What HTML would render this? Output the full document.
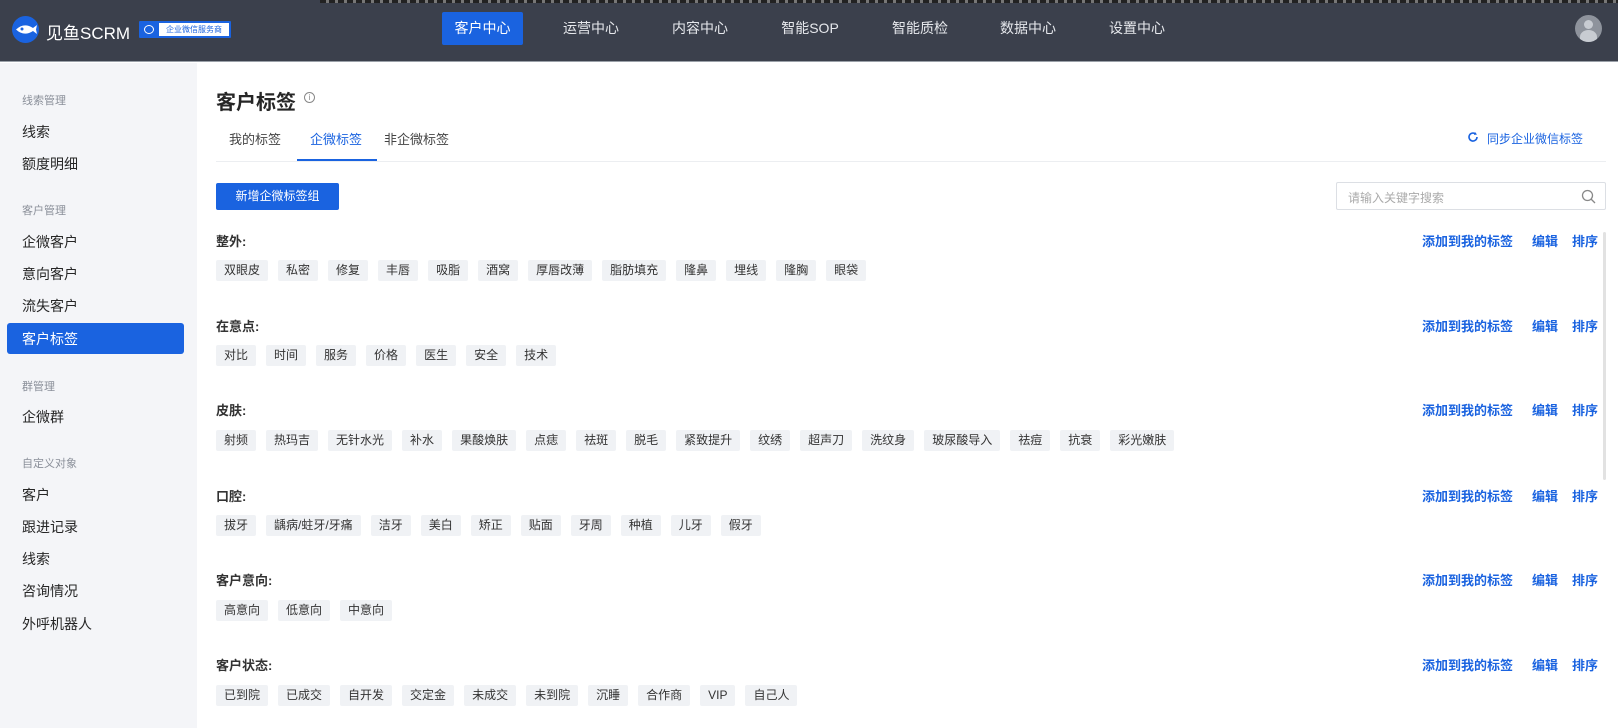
<!DOCTYPE html>
<html><head><meta charset="utf-8"><style>
*{margin:0;padding:0;box-sizing:border-box}
body{width:1618px;height:728px;overflow:hidden;background:#fff;font-family:"Liberation Sans","Noto Sans CJK SC",sans-serif;position:relative;color:#262626}
.hdr{position:absolute;left:0;top:0;width:1618px;height:62px;background:#3b404c;border-bottom:1px solid #9aa0a8}
.strip{position:absolute;left:320px;top:0;width:1298px;height:3px;background:repeating-linear-gradient(90deg,#222 0 6px,#777 6px 9px)}
.nav{position:absolute;top:12px;height:33px;line-height:33px;color:#e6e8ec;font-size:14px;transform:translateX(-50%)}
.nav.on{background:#1a63e0;color:#fff;width:81px;text-align:center;transform:none;left:442px;border-radius:2px}
.side{position:absolute;left:0;top:63px;width:197px;height:665px;background:#f4f5f8}
.sg{position:absolute;left:22px;font-size:11px;color:#8a8f99}
.si{position:absolute;left:22px;font-size:14px;color:#262626}
.sel{position:absolute;left:7px;top:323px;width:177px;height:31px;background:#1a63e0;border-radius:3px}
.t{position:absolute;white-space:nowrap}
.lbl{position:absolute;left:216px;font-size:13px;font-weight:bold;color:#333}
.tags{position:absolute;left:216px;display:flex;gap:10px}
.tags span{background:#f0f2f5;font-size:12px;color:#333;height:21px;line-height:21px;padding:0 8px;border-radius:2px}
.act{position:absolute;font-size:13px;color:#1a63e0;font-weight:bold}
</style></head><body>
<div class="hdr"><div class="strip"></div>
<svg style="position:absolute;left:12px;top:16px" width="27" height="27" viewBox="0 0 27 27"><circle cx="13.5" cy="13.5" r="13.5" fill="#1a63e0"/><path d="M4 13.5 Q12 6 21 12 L25 9 L24 13.5 L25 18 L21 15 Q12 21 4 13.5Z" fill="#fff"/><circle cx="10" cy="13" r="1.5" fill="#1a63e0"/></svg>
<div class="t" style="left:46px;top:19px;font-size:17px;color:#fff">见鱼SCRM</div>
<div style="position:absolute;left:139px;top:21px;width:92px;height:17px;background:#1a63e0;border-radius:1px"><div style="position:absolute;left:20px;top:2px;width:70px;height:13px;background:#fff;color:#1a63e0;font-size:8px;line-height:13px;text-align:center">企业微信服务商</div><div style="position:absolute;left:5px;top:4px;width:10px;height:9px;border:1.5px solid #fff;border-radius:50%"></div></div>
<div class="nav on">客户中心</div>
<div class="nav" style="left:591px">运营中心</div>
<div class="nav" style="left:700px">内容中心</div>
<div class="nav" style="left:810px">智能SOP</div>
<div class="nav" style="left:920px">智能质检</div>
<div class="nav" style="left:1028px">数据中心</div>
<div class="nav" style="left:1137px">设置中心</div>
<div style="position:absolute;left:1575px;top:15px;width:27px;height:27px;border-radius:50%;background:#8e939c;overflow:hidden"><div style="position:absolute;left:9px;top:5px;width:9px;height:9px;border-radius:50%;background:#c8ccd2"></div><div style="position:absolute;left:5px;top:15px;width:17px;height:14px;border-radius:50% 50% 0 0;background:#c8ccd2"></div></div>
</div>
<div class="side"></div>
<div class="sel"></div>
<div class="sg" style="top:92px">线索管理</div>
<div class="si" style="top:122px">线索</div>
<div class="si" style="top:154px">额度明细</div>
<div class="sg" style="top:202px">客户管理</div>
<div class="si" style="top:232px">企微客户</div>
<div class="si" style="top:264px">意向客户</div>
<div class="si" style="top:296px">流失客户</div>
<div class="si" style="top:329px;color:#fff">客户标签</div>
<div class="sg" style="top:378px">群管理</div>
<div class="si" style="top:407px">企微群</div>
<div class="sg" style="top:455px">自定义对象</div>
<div class="si" style="top:485px">客户</div>
<div class="si" style="top:517px">跟进记录</div>
<div class="si" style="top:549px">线索</div>
<div class="si" style="top:581px">咨询情况</div>
<div class="si" style="top:614px">外呼机器人</div>

<div class="t" style="left:216px;top:86px;font-size:20px;font-weight:bold;color:#262626">客户标签</div>
<div style="position:absolute;left:304px;top:92px;width:11px;height:11px;border:1px solid #888;border-radius:50%;font-size:8px;line-height:9px;text-align:center;color:#888">i</div>
<div class="t" style="left:229px;top:129px;font-size:13px;color:#444">我的标签</div>
<div class="t" style="left:310px;top:129px;font-size:13px;color:#1a63e0">企微标签</div>
<div class="t" style="left:384px;top:129px;font-size:13px;color:#444">非企微标签</div>
<div style="position:absolute;left:216px;top:161px;width:1390px;height:1px;background:#eceef1"></div>
<div style="position:absolute;left:297px;top:159px;width:80px;height:2px;background:#1a63e0"></div>
<svg style="position:absolute;left:1467px;top:131px" width="12" height="12" viewBox="0 0 12 12"><path d="M10 6A4 4 0 1 1 8.5 2.9" fill="none" stroke="#1a63e0" stroke-width="1.6"/><path d="M8 1L10 3.5 7 4" fill="#1a63e0"/></svg>
<div class="t" style="left:1487px;top:130px;font-size:12px;color:#1a63e0">同步企业微信标签</div>
<div style="position:absolute;left:216px;top:183px;width:123px;height:27px;background:#1a63e0;border-radius:2px;color:#fff;font-size:12px;line-height:27px;text-align:center">新增企微标签组</div>
<div style="position:absolute;left:1336px;top:182px;width:270px;height:28px;border:1px solid #dcdfe4;border-radius:2px"><div class="t" style="left:11px;top:6px;font-size:12px;color:#aaa">请输入关键字搜索</div>
<svg style="position:absolute;right:9px;top:6px" width="15" height="15" viewBox="0 0 15 15"><circle cx="6.5" cy="6.5" r="5" fill="none" stroke="#888" stroke-width="1.3"/><path d="M10 10L14 14" stroke="#888" stroke-width="1.3"/></svg></div>
<div style="position:absolute;left:1603px;top:232px;width:3px;height:248px;background:#e2e2e2;border-radius:2px"></div>

<div class="lbl" style="top:231px">整外:</div>
<div class="tags" style="top:260px"><span>双眼皮</span><span>私密</span><span>修复</span><span>丰唇</span><span>吸脂</span><span>酒窝</span><span>厚唇改薄</span><span>脂肪填充</span><span>隆鼻</span><span>埋线</span><span>隆胸</span><span>眼袋</span></div>
<div class="lbl" style="top:316px">在意点:</div>
<div class="tags" style="top:345px"><span>对比</span><span>时间</span><span>服务</span><span>价格</span><span>医生</span><span>安全</span><span>技术</span></div>
<div class="lbl" style="top:400px">皮肤:</div>
<div class="tags" style="top:430px"><span>射频</span><span>热玛吉</span><span>无针水光</span><span>补水</span><span>果酸焕肤</span><span>点痣</span><span>祛斑</span><span>脱毛</span><span>紧致提升</span><span>纹绣</span><span>超声刀</span><span>洗纹身</span><span>玻尿酸导入</span><span>祛痘</span><span>抗衰</span><span>彩光嫩肤</span></div>
<div class="lbl" style="top:486px">口腔:</div>
<div class="tags" style="top:515px"><span>拔牙</span><span>龋病/蛀牙/牙痛</span><span>洁牙</span><span>美白</span><span>矫正</span><span>贴面</span><span>牙周</span><span>种植</span><span>儿牙</span><span>假牙</span></div>
<div class="lbl" style="top:570px">客户意向:</div>
<div class="tags" style="top:600px"><span>高意向</span><span>低意向</span><span>中意向</span></div>
<div class="lbl" style="top:655px">客户状态:</div>
<div class="tags" style="top:685px"><span>已到院</span><span>已成交</span><span>自开发</span><span>交定金</span><span>未成交</span><span>未到院</span><span>沉睡</span><span>合作商</span><span>VIP</span><span>自己人</span></div>

<div class="act" style="left:1422px;top:231px">添加到我的标签</div><div class="act" style="left:1532px;top:231px">编辑</div><div class="act" style="left:1572px;top:231px">排序</div>
<div class="act" style="left:1422px;top:316px">添加到我的标签</div><div class="act" style="left:1532px;top:316px">编辑</div><div class="act" style="left:1572px;top:316px">排序</div>
<div class="act" style="left:1422px;top:400px">添加到我的标签</div><div class="act" style="left:1532px;top:400px">编辑</div><div class="act" style="left:1572px;top:400px">排序</div>
<div class="act" style="left:1422px;top:486px">添加到我的标签</div><div class="act" style="left:1532px;top:486px">编辑</div><div class="act" style="left:1572px;top:486px">排序</div>
<div class="act" style="left:1422px;top:570px">添加到我的标签</div><div class="act" style="left:1532px;top:570px">编辑</div><div class="act" style="left:1572px;top:570px">排序</div>
<div class="act" style="left:1422px;top:655px">添加到我的标签</div><div class="act" style="left:1532px;top:655px">编辑</div><div class="act" style="left:1572px;top:655px">排序</div>
</body></html>
